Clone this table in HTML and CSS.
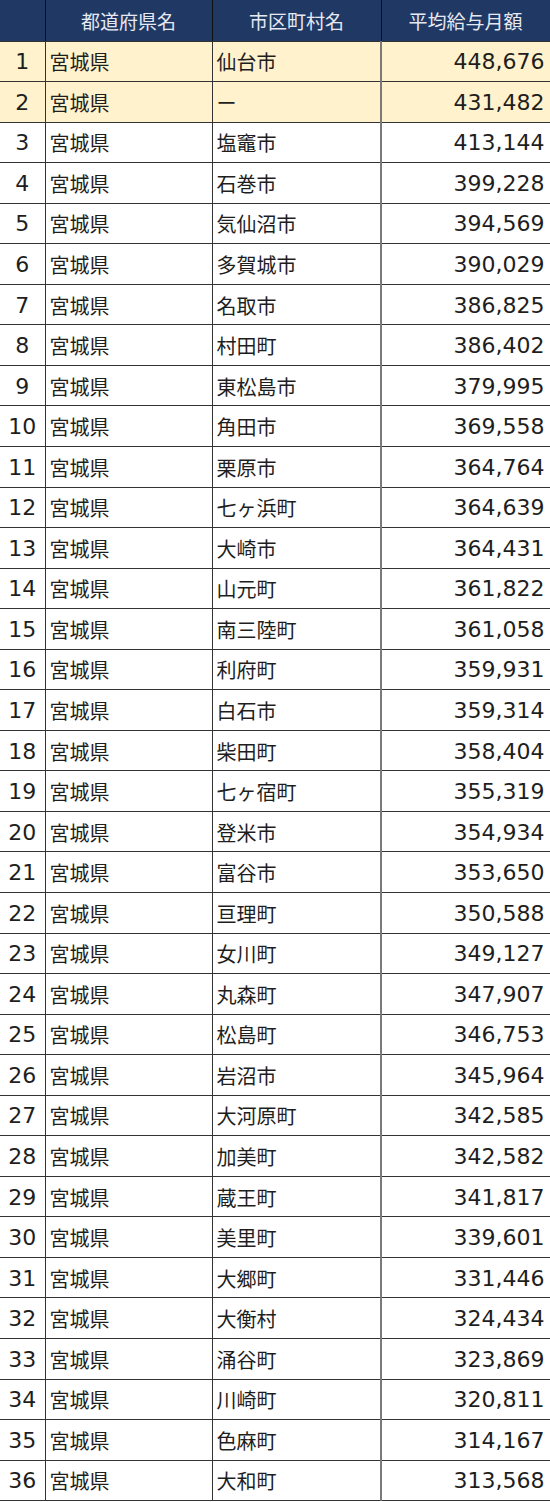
FILE: index.html
```html
<!DOCTYPE html>
<html lang="ja">
<head>
<meta charset="utf-8">
<title>宮城県 市区町村別 平均給与月額</title>
<link rel="stylesheet" href="styles.css">
</head>
<body>
<table class="rank">
<thead>
<tr><th class="c-no"></th><th class="c-pref">都道府県名</th><th class="c-city">市区町村名</th><th class="c-val">平均給与月額</th></tr>
</thead>
<tbody>
<tr class="hl"><td class="c-no">1</td><td class="c-pref">宮城県</td><td class="c-city">仙台市</td><td class="c-val">448,676</td></tr>
<tr class="hl"><td class="c-no">2</td><td class="c-pref">宮城県</td><td class="c-city">ー</td><td class="c-val">431,482</td></tr>
<tr><td class="c-no">3</td><td class="c-pref">宮城県</td><td class="c-city">塩竈市</td><td class="c-val">413,144</td></tr>
<tr><td class="c-no">4</td><td class="c-pref">宮城県</td><td class="c-city">石巻市</td><td class="c-val">399,228</td></tr>
<tr><td class="c-no">5</td><td class="c-pref">宮城県</td><td class="c-city">気仙沼市</td><td class="c-val">394,569</td></tr>
<tr><td class="c-no">6</td><td class="c-pref">宮城県</td><td class="c-city">多賀城市</td><td class="c-val">390,029</td></tr>
<tr><td class="c-no">7</td><td class="c-pref">宮城県</td><td class="c-city">名取市</td><td class="c-val">386,825</td></tr>
<tr><td class="c-no">8</td><td class="c-pref">宮城県</td><td class="c-city">村田町</td><td class="c-val">386,402</td></tr>
<tr><td class="c-no">9</td><td class="c-pref">宮城県</td><td class="c-city">東松島市</td><td class="c-val">379,995</td></tr>
<tr><td class="c-no">10</td><td class="c-pref">宮城県</td><td class="c-city">角田市</td><td class="c-val">369,558</td></tr>
<tr><td class="c-no">11</td><td class="c-pref">宮城県</td><td class="c-city">栗原市</td><td class="c-val">364,764</td></tr>
<tr><td class="c-no">12</td><td class="c-pref">宮城県</td><td class="c-city">七ヶ浜町</td><td class="c-val">364,639</td></tr>
<tr><td class="c-no">13</td><td class="c-pref">宮城県</td><td class="c-city">大崎市</td><td class="c-val">364,431</td></tr>
<tr><td class="c-no">14</td><td class="c-pref">宮城県</td><td class="c-city">山元町</td><td class="c-val">361,822</td></tr>
<tr><td class="c-no">15</td><td class="c-pref">宮城県</td><td class="c-city">南三陸町</td><td class="c-val">361,058</td></tr>
<tr><td class="c-no">16</td><td class="c-pref">宮城県</td><td class="c-city">利府町</td><td class="c-val">359,931</td></tr>
<tr><td class="c-no">17</td><td class="c-pref">宮城県</td><td class="c-city">白石市</td><td class="c-val">359,314</td></tr>
<tr><td class="c-no">18</td><td class="c-pref">宮城県</td><td class="c-city">柴田町</td><td class="c-val">358,404</td></tr>
<tr><td class="c-no">19</td><td class="c-pref">宮城県</td><td class="c-city">七ヶ宿町</td><td class="c-val">355,319</td></tr>
<tr><td class="c-no">20</td><td class="c-pref">宮城県</td><td class="c-city">登米市</td><td class="c-val">354,934</td></tr>
<tr><td class="c-no">21</td><td class="c-pref">宮城県</td><td class="c-city">富谷市</td><td class="c-val">353,650</td></tr>
<tr><td class="c-no">22</td><td class="c-pref">宮城県</td><td class="c-city">亘理町</td><td class="c-val">350,588</td></tr>
<tr><td class="c-no">23</td><td class="c-pref">宮城県</td><td class="c-city">女川町</td><td class="c-val">349,127</td></tr>
<tr><td class="c-no">24</td><td class="c-pref">宮城県</td><td class="c-city">丸森町</td><td class="c-val">347,907</td></tr>
<tr><td class="c-no">25</td><td class="c-pref">宮城県</td><td class="c-city">松島町</td><td class="c-val">346,753</td></tr>
<tr><td class="c-no">26</td><td class="c-pref">宮城県</td><td class="c-city">岩沼市</td><td class="c-val">345,964</td></tr>
<tr><td class="c-no">27</td><td class="c-pref">宮城県</td><td class="c-city">大河原町</td><td class="c-val">342,585</td></tr>
<tr><td class="c-no">28</td><td class="c-pref">宮城県</td><td class="c-city">加美町</td><td class="c-val">342,582</td></tr>
<tr><td class="c-no">29</td><td class="c-pref">宮城県</td><td class="c-city">蔵王町</td><td class="c-val">341,817</td></tr>
<tr><td class="c-no">30</td><td class="c-pref">宮城県</td><td class="c-city">美里町</td><td class="c-val">339,601</td></tr>
<tr><td class="c-no">31</td><td class="c-pref">宮城県</td><td class="c-city">大郷町</td><td class="c-val">331,446</td></tr>
<tr><td class="c-no">32</td><td class="c-pref">宮城県</td><td class="c-city">大衡村</td><td class="c-val">324,434</td></tr>
<tr><td class="c-no">33</td><td class="c-pref">宮城県</td><td class="c-city">涌谷町</td><td class="c-val">323,869</td></tr>
<tr><td class="c-no">34</td><td class="c-pref">宮城県</td><td class="c-city">川崎町</td><td class="c-val">320,811</td></tr>
<tr><td class="c-no">35</td><td class="c-pref">宮城県</td><td class="c-city">色麻町</td><td class="c-val">314,167</td></tr>
<tr><td class="c-no">36</td><td class="c-pref">宮城県</td><td class="c-city">大和町</td><td class="c-val">313,568</td></tr>
</tbody>
</table>
</body>
</html>
```
FILE: styles.css
```css
html, body {
  margin: 0;
  padding: 0;
  background: #ffffff;
}
.rank {
  width: 550px;
  border-collapse: collapse;
  table-layout: fixed;
  font-family: "DejaVu Sans", "Noto Sans CJK JP", sans-serif;
  font-size: 22px;
  color: #1e1e1e;
}
.rank th {
  height: 41px;
  padding: 0;
  background: #1f3864;
  color: #e6e9f2;
  font-weight: normal;
  font-family: "Noto Sans CJK JP", sans-serif;
  font-size: 19px;
  text-align: center;
  border-left: 1px solid #111111;
  border-bottom: 1px solid #333333;
  box-sizing: border-box;
}
.rank th:first-child { border-left: none; }
.rank td {
  height: 40.55px;
  padding: 0;
  padding-top: 2px;
  border-bottom: 1px solid #333333;
  border-left: 1px solid #333333;
  box-sizing: border-box;
  white-space: nowrap;
  line-height: 1;
}
.rank td:first-child { border-left: none; }
.rank .c-no { width: 45px; text-align: center; }
.rank .c-pref { width: 167px; }
.rank .c-city { width: 169px; }
.rank .c-val { width: 169px; }
.rank td.c-pref, .rank td.c-city {
  padding-left: 4px;
  font-family: "Noto Sans CJK JP", sans-serif;
  font-size: 20px;
}
.rank td.c-val {
  text-align: right;
  padding-right: 5px;
  border-left: 2px solid #7a7a7a;
  border-right: 1px solid #333333;
}
.rank th.c-val { border-right: 1px solid #1f3864; }
.rank tr.hl td { background: #fff2cc; }
```
